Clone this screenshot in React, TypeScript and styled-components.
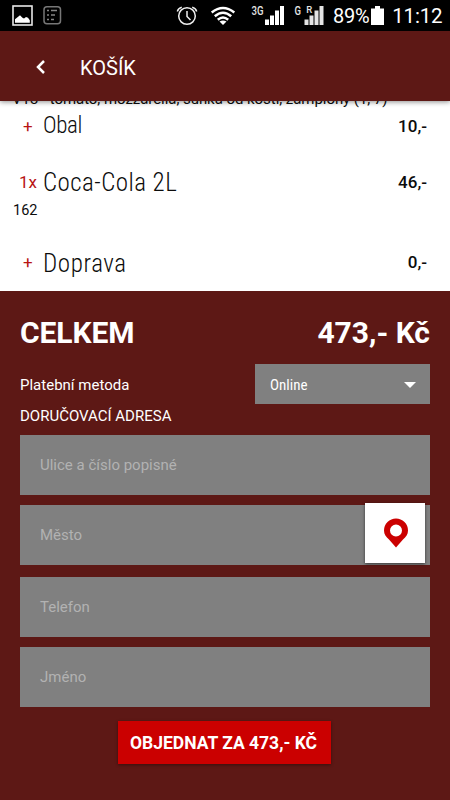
import React from 'react';
import styled, { createGlobalStyle } from 'styled-components';

const Global = createGlobalStyle`
  * { box-sizing: border-box; }
  body { margin: 0; background: #5d1815; font-family: Roboto, "Noto Sans", sans-serif; }
`;

const Screen = styled.div`
  width: 450px;
  height: 800px;
  overflow: hidden;
  display: flex;
  flex-direction: column;
  background: #5d1815;
  color: #fff;
`;

const StatusBar = styled.div`
  height: 31px;
  flex: none;
  background: #000;
  display: flex;
`;

const Header = styled.header`
  height: 70px;
  flex: none;
  display: flex;
  align-items: center;
  padding: 2px 0 0 35px;
  background: #5d1815;
  z-index: 1;
  box-shadow: 0 1px 5px rgba(0, 0, 0, 0.45);
`;

const Label = styled.span<{ $size: number; $weight?: number; $spacing?: number }>`
  font-size: ${p => p.$size}px;
  font-weight: ${p => p.$weight ?? 400};
  letter-spacing: ${p => p.$spacing ?? 0}px;
  white-space: nowrap;
`;

const Title = styled(Label)`
  margin-left: 34px;
  padding-top: 1px;
`;

const List = styled.main`
  height: 190px;
  flex: none;
  background: #fff;
  color: #0c0c0c;
`;

const Description = styled.div`
  margin-top: -11px;
  padding-left: 12px;
  height: 18px;
  line-height: 19px;
  font-size: 15px;
  letter-spacing: -0.05px;
  white-space: nowrap;
`;

const Row = styled.div<{ $height: number; $gap?: number }>`
  height: ${p => p.$height}px;
  margin-bottom: ${p => p.$gap ?? 0}px;
  display: flex;
  align-items: center;
  padding-right: 23px;
`;

const Quantity = styled.span<{ $plus?: boolean }>`
  width: 43px;
  padding-left: ${p => (p.$plus ? 23 : 19)}px;
  color: #b81414;
  font-size: 17px;
`;

const Name = styled.span<{ $size: number; $spacing: number; $raise?: number; $lower?: number }>`
  flex: 1;
  padding-top: ${p => p.$lower ?? 0}px;
  padding-bottom: ${p => p.$raise ?? 0}px;
  font-family: "Roboto Condensed", Roboto, sans-serif;
  font-stretch: 75%;
  font-weight: 300;
  font-size: ${p => p.$size}px;
  letter-spacing: ${p => p.$spacing}px;
`;

const Code = styled.div`
  padding-left: 13px;
  height: 46px;
  line-height: 24px;
  font-size: 14.5px;
`;

const Checkout = styled.section`
  padding: 0 20px;
  display: flex;
  flex-direction: column;
  z-index: 1;
`;

const Total = styled.div`
  height: 73px;
  padding-top: 9px;
  display: flex;
  align-items: center;
  justify-content: space-between;
`;

const Payment = styled.div`
  height: 40px;
  display: flex;
  align-items: center;
  justify-content: space-between;
`;

const Caption = styled(Label)`
  padding-top: 1px;
`;

const Select = styled.div`
  width: 175px;
  height: 40px;
  padding: 1px 14px 0 15px;
  display: flex;
  align-items: center;
  justify-content: space-between;
  background: #808080;
`;

const Choice = styled(Label)`
  font-family: "Roboto Condensed", Roboto, sans-serif;
  font-stretch: 75%;
`;

const Address = styled.div`
  height: 31px;
  line-height: 24px;
`;

const Field = styled.div<{ $gap: number }>`
  height: 60px;
  margin-bottom: ${p => p.$gap}px;
  padding: 0 5px 0 20px;
  display: flex;
  align-items: center;
  justify-content: space-between;
  background: #808080;
  color: #b2b2b2;
`;

const Locate = styled.div`
  width: 60px;
  height: 60px;
  margin-top: -4px;
  display: flex;
  align-items: center;
  justify-content: center;
  padding: 0 0 1px 1px;
  background: #fff;
  box-shadow: 0 1px 3px rgba(0, 0, 0, 0.6);
`;

const Order = styled.div`
  align-self: center;
  width: 213px;
  height: 43px;
  margin-left: -1px;
  display: flex;
  align-items: center;
  justify-content: center;
  padding: 1px 2px 0 0;
  background: #cb0000;
  box-shadow: 0 1px 3px rgba(0, 0, 0, 0.4);
`;

const StatusIcons = () => (
  <svg width="330" height="31" viewBox="0 0 330 31" fill="none">
    <rect x="13" y="6" width="19" height="19" stroke="#e8e8e8" strokeWidth="1.6" />
    <path d="M15 22.800v-3.500l2.500-2 2.500-2 2.500 2.500 1.500.7 2-1.500 2 .8 1.800 2.500v2.500z" fill="#fff" />
    <rect x="44" y="6.700" width="16.500" height="17" rx="3" stroke="#777" strokeWidth="1.500" />
    <path d="M47 10.500h2M51 10.500h6M47 15h2M51 15h4M47 19.500h2M51 19.500h3" stroke="#858585" strokeWidth="1.500" />
    <g stroke="#eee" strokeWidth="1.500">
      <circle cx="187" cy="16" r="8.300" />
      <path d="M187 11v5.500l3.500 3.500M177.300 11.500c.6-2 2-3.500 4.500-4.200M196.700 11.500c-.6-2-2-3.500-4.500-4.200" />
    </g>
    <g stroke="#fff" strokeWidth="2.500">
      <path d="M211.700 12.500Q223 3.500 234.300 12.500M214.800 16.200Q223 9.300 231.200 16.200M217.800 19.700Q223 15.300 228.200 19.700" />
    </g>
    <path d="M219.500 21.500Q223 19.300 226.500 21.500L223 25z" fill="#fff" />
    <path d="M265 19.500h4v5.500h-4zM270 15.500h4v9.500h-4zM275 10.500h4v14.500h-4zM280 6h4v19h-4z" fill="#fff" />
    <path d="M304.500 19.500h4v5.500h-4zM309.500 15.500h4v9.500h-4zM314.500 10.500h4v14.500h-4zM319.500 6h4v19h-4z" fill="#e4e4e4" />
    <g fill="#e4e4e4" fontFamily="Roboto, sans-serif" fontWeight="500">
      <text x="251.500" y="15" fontSize="12" textLength="12" lengthAdjust="spacingAndGlyphs">3G</text>
      <text x="294.500" y="15" fontSize="12" textLength="6.500" lengthAdjust="spacingAndGlyphs">G</text>
      <text x="306.300" y="13" fontSize="9.500">R</text>
    </g>
  </svg>
);

const StatusText = styled.div`
  display: flex;
  align-items: center;
  gap: 2px;
  padding: 0 0 0 3px;
`;

const Clock = styled(Label)`
  margin-left: 6px;
`;

export default function App() {
  return (
    <>
      <Global />
      <Screen>
        <StatusBar>
          <StatusIcons />
          <StatusText>
            <Label $size={20} $spacing={-0.3}>89%</Label>
            <svg width="13" height="19" viewBox="0 0 13 19">
              <path d="M0 2.500h4V0h5v2.500h4V19H0z" fill="#fff" />
            </svg>
            <Clock $size={20.5} $spacing={-0.2}>11:12</Clock>
          </StatusText>
        </StatusBar>
        <Header>
          <svg width="11" height="16" viewBox="0 0 11 16">
            <path d="M9 2L3 8l6 6" fill="none" stroke="#fff" strokeWidth="2.500" />
          </svg>
          <Title $size={20}>KOŠÍK</Title>
        </Header>
        <List>
          <Description>V13 - tomato, mozzarella, šunka od kosti, žampiony (1, 7)</Description>
          <Row $height={36} $gap={20}>
            <Quantity $plus>+</Quantity>
            <Name $size={23} $spacing={-0.4} $raise={1}>Obal</Name>
            <Label $size={17} $weight={500}>10,-</Label>
          </Row>
          <Row $height={35}>
            <Quantity>1x</Quantity>
            <Name $size={25} $spacing={0.45} $lower={2}>Coca-Cola 2L</Name>
            <Label $size={17} $weight={500}>46,-</Label>
          </Row>
          <Code>162</Code>
          <Row $height={34}>
            <Quantity $plus>+</Quantity>
            <Name $size={25} $spacing={0.6} $lower={2}>Doprava</Name>
            <Label $size={17} $weight={500}>0,-</Label>
          </Row>
        </List>
        <Checkout>
          <Total>
            <Label $size={30} $weight={700} $spacing={-0.1}>CELKEM</Label>
            <Label $size={30} $weight={700}>473,- Kč</Label>
          </Total>
          <Payment>
            <Caption $size={15}>Platební metoda</Caption>
            <Select>
              <Choice $size={15}>Online</Choice>
              <svg width="12" height="6" viewBox="0 0 12 6"><path d="M0 0h12L6 6z" fill="#fff" /></svg>
            </Select>
          </Payment>
          <Address><Label $size={15}>DORUČOVACÍ ADRESA</Label></Address>
          <Field $gap={10}><Label $size={15}>Ulice a číslo popisné</Label></Field>
          <Field $gap={12}>
            <Label $size={15}>Město</Label>
            <Locate>
              <svg width="26" height="31" viewBox="0 0 26 31">
                <path fillRule="evenodd" fill="#cb0000" d="M13 1.500a12 12 0 0 1 12 12c0 4-2 6-5 9l-7 8-7-8c-3-3-5-5-5-9a12 12 0 0 1 12-12zM13 7.500a6 6 0 1 0 0 12 6 6 0 0 0 0-12z" />
              </svg>
            </Locate>
          </Field>
          <Field $gap={10}><Label $size={15}>Telefon</Label></Field>
          <Field $gap={14}><Label $size={15}>Jméno</Label></Field>
          <Order><Label $size={17.5} $weight={700}>OBJEDNAT ZA 473,- KČ</Label></Order>
        </Checkout>
      </Screen>
    </>
  );
}
